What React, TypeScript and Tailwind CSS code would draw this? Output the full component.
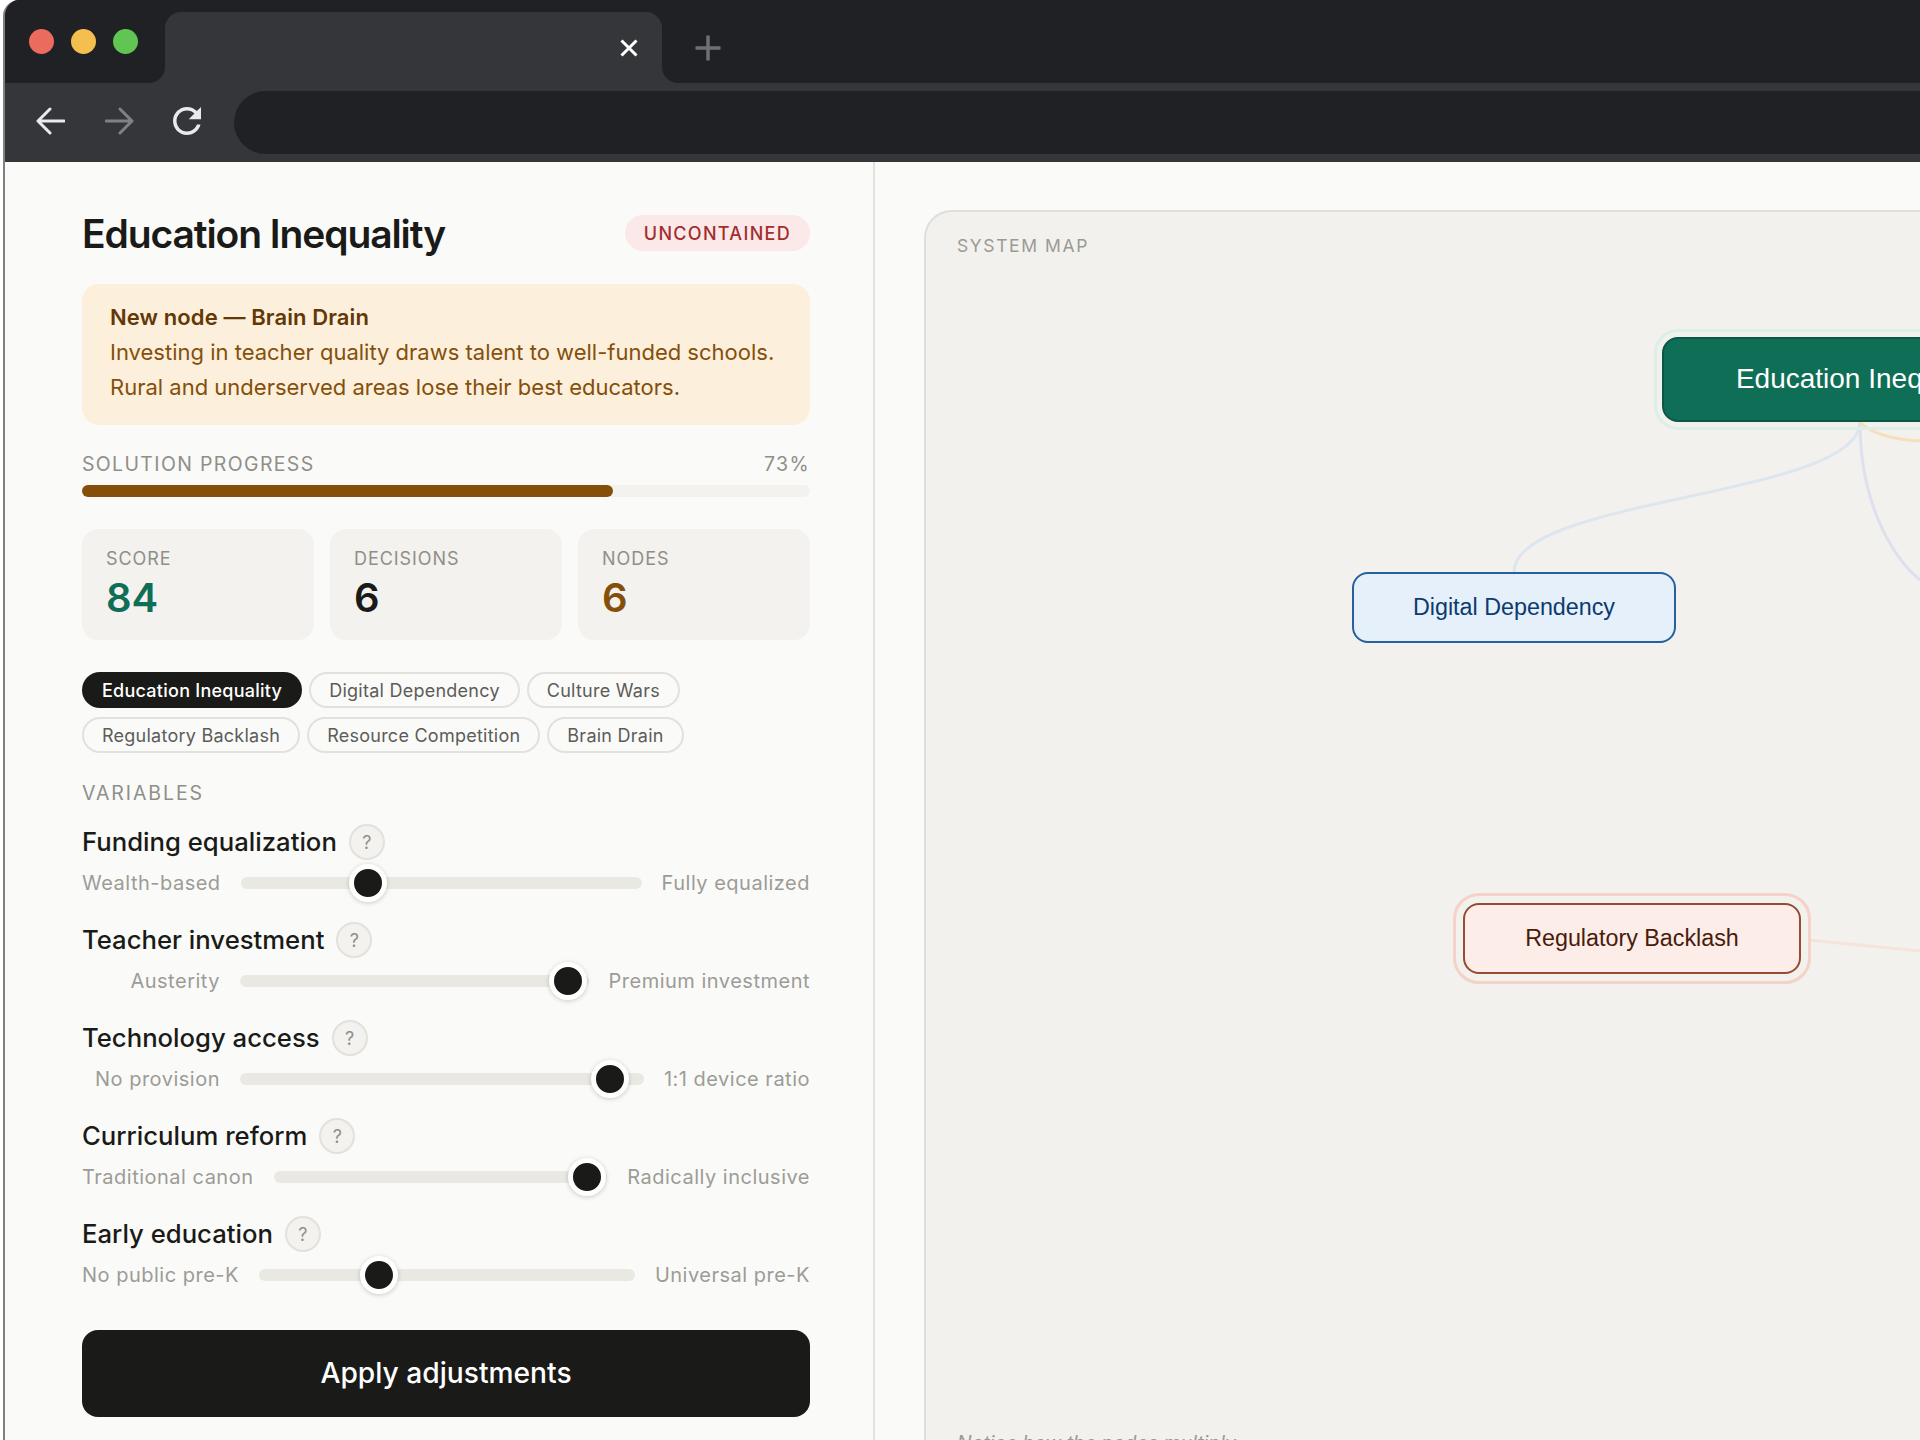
import React from 'react';

const pillsTop = ['Digital Dependency', 'Culture Wars'];
const pillsBottom = ['Regulatory Backlash', 'Resource Competition', 'Brain Drain'];

const variables = [
  { name: 'Funding equalization', left: 'Wealth-based', right: 'Fully equalized', pos: 31.8 },
  { name: 'Teacher investment', left: 'Austerity', right: 'Premium investment', pos: 94 },
  { name: 'Technology access', left: 'No provision', right: '1:1 device ratio', pos: 91.5 },
  { name: 'Curriculum reform', left: 'Traditional canon', right: 'Radically inclusive', pos: 94 },
  { name: 'Early education', left: 'No public pre-K', right: 'Universal pre-K', pos: 31.9 },
];

const Pill = ({ label }: { label: string }) => (
  <span className="flex h-[36px] items-center rounded-full border-2 border-[#e2e1dc] px-[18px] text-[18px] tracking-[0.25px] text-[#5c5c58]">
    {label}
  </span>
);

const Stat = ({ label, value, color }: { label: string; value: string; color: string }) => (
  <div className="h-[111px] flex-1 rounded-[16px] bg-[#f3f2ee] pl-[24px] pt-[19px]">
    <div className="text-[18px] leading-[22px] tracking-[0.95px] text-[#8f8f8a]">{label}</div>
    <div className={`mt-[4px] text-[40px] font-semibold leading-[48px] ${color}`}>{value}</div>
  </div>
);

const Variable = ({ name, left, right, pos }: (typeof variables)[number]) => (
  <div className="h-[98px]">
    <div className="flex h-[36px] items-center gap-[12px]">
      <span className="text-[25.7px] font-medium text-[#1a1a18]">{name}</span>
      <span className="flex h-[36px] w-[36px] items-center justify-center rounded-full border-2 border-[#e2e1dc] bg-[#f3f2ee] text-[18px] text-[#8f8f8a]">
        ?
      </span>
    </div>
    <div className="mt-[5px] flex h-[36px] items-center gap-[20px] text-[20px] tracking-[0.5px] text-[#9c9c97]">
      <span className="min-w-[138px] text-right">{left}</span>
      <div className="relative h-[12px] flex-1 rounded-full bg-[#e9e8e3]">
        <div
          className="absolute top-1/2 h-[38px] w-[38px] -translate-x-1/2 -translate-y-1/2 rounded-full border-[5px] border-white bg-[#1a1a18] shadow-[0_1px_5px_rgba(0,0,0,0.2)]"
          style={{ left: `${pos}%` }}
        />
      </div>
      <span>{right}</span>
    </div>
  </div>
);

const BrowserChrome = () => (
  <div className="bg-[#35363a]">
    <div className="flex h-[83px]">
      <div className="flex w-[160px] shrink-0 items-start gap-[17px] rounded-br-[16px] bg-[#202124] pl-[24px] pt-[29px]">
        <span className="h-[25px] w-[25px] rounded-full bg-[#ed6a5e]" />
        <span className="h-[25px] w-[25px] rounded-full bg-[#f5bf4f]" />
        <span className="h-[25px] w-[25px] rounded-full bg-[#61c554]" />
      </div>
      <div className="w-[497px] shrink-0 bg-[#202124]">
        <div className="mt-[12px] flex h-[71px] items-start justify-end rounded-t-[16px] bg-[#35363a] pr-[24px] pt-[27px]">
          <svg width="18" height="18" viewBox="0 0 18 18" stroke="#ffffff" strokeWidth="3" fill="none">
            <path d="M1.5 1.5L16.5 16.5M16.5 1.5L1.5 16.5" />
          </svg>
        </div>
      </div>
      <div className="flex-1 rounded-bl-[16px] bg-[#202124] pl-[33px] pt-[35px]">
        <svg width="26" height="26" viewBox="0 0 26 26" stroke="#6f7074" strokeWidth="3.5" fill="none">
          <path d="M13 0.5V25.5M0.5 13H25.5" />
        </svg>
      </div>
    </div>
    <div className="flex h-[79px] items-center">
      <div className="flex w-[229px] shrink-0 items-center pb-[3px]">
        <svg width="30" height="30" viewBox="0 0 30 30" className="ml-[30px]" stroke="#e8eaed" strokeWidth="3" fill="none" strokeLinecap="round" strokeLinejoin="round">
          <path d="M29 15H3M15 3L3 15L15 27" />
        </svg>
        <svg width="30" height="30" viewBox="0 0 30 30" className="ml-[40px]" stroke="#808184" strokeWidth="3" fill="none" strokeLinecap="round" strokeLinejoin="round">
          <path d="M1 15H27M15 3L27 15L15 27" />
        </svg>
        <svg width="42" height="42" viewBox="0 0 24 24" className="ml-[31px]" fill="#e8eaed">
          <path d="M17.65 6.35C16.2 4.9 14.21 4 12 4c-4.42 0-7.99 3.58-7.99 8s3.57 8 7.99 8c3.73 0 6.84-2.55 7.73-6h-2.08c-.82 2.33-3.04 4-5.65 4-3.31 0-6-2.69-6-6s2.69-6 6-6c1.66 0 3.14.69 4.22 1.78L13 11h7V4l-2.35 2.35z" />
        </svg>
      </div>
      <div className="h-[63px] flex-1 rounded-l-full bg-[#202124]" />
    </div>
  </div>
);

const SidePanel = () => (
  <aside className="w-[870px] shrink-0 border-r-2 border-[#e2e1dc] pl-[77px] pr-[63px] pt-[53px]">
    <div className="flex h-[36px] items-center justify-between">
      <h1 className="pt-[2px] text-[39px] font-semibold tracking-[-1.1px] text-[#1a1a18]">Education Inequality</h1>
      <span className="flex h-[36px] items-center rounded-full bg-[#fbe9ea] px-[19px] text-[18px] font-medium tracking-[1.3px] text-[#a32d2d]">
        UNCONTAINED
      </span>
    </div>

    <div className="mt-[33px] h-[141px] rounded-[17px] bg-[#fcf0dc] pl-[28px] pt-[16px] text-[22px] leading-[35px] text-[#854f0b]">
      <div className="font-semibold tracking-[0.1px] text-[#633806]">New node — Brain Drain</div>
      <div>Investing in teacher quality draws talent to well-funded schools.</div>
      <div>Rural and underserved areas lose their best educators.</div>
    </div>

    <div className="mt-[27px] flex h-[26px] items-center justify-between text-[19.5px] tracking-[1.35px] text-[#8f8f8a]">
      <span>SOLUTION PROGRESS</span>
      <span>73%</span>
    </div>
    <div className="mt-[7px] h-[12px] rounded-full bg-[#f3f2ee]">
      <div className="h-full w-[73%] rounded-full bg-[#854f0b]" />
    </div>

    <div className="mt-[32px] flex gap-[16px]">
      <Stat label="SCORE" value="84" color="text-[#0f6e56]" />
      <Stat label="DECISIONS" value="6" color="text-[#1a1a18]" />
      <Stat label="NODES" value="6" color="text-[#854f0b]" />
    </div>

    <div className="mt-[32px] flex gap-[7px]">
      <span className="flex h-[36px] items-center rounded-full bg-[#1a1a18] px-[20px] text-[18px] font-medium tracking-[0.25px] text-white">
        Education Inequality
      </span>
      {pillsTop.map((p) => (
        <Pill key={p} label={p} />
      ))}
    </div>
    <div className="mt-[9px] flex gap-[7px]">
      {pillsBottom.map((p) => (
        <Pill key={p} label={p} />
      ))}
    </div>

    <div className="mt-[27px] h-[26px] text-[19.5px] leading-[26px] tracking-[1.9px] text-[#8f8f8a]">VARIABLES</div>

    <div className="mt-[18px]">
      {variables.map((v) => (
        <Variable key={v.name} {...v} />
      ))}
    </div>

    <button className="mt-[16px] h-[87px] w-full rounded-[16px] bg-[#1a1a18] text-[28.2px] font-medium text-white">
      Apply adjustments
    </button>
  </aside>
);

const SystemMap = () => (
  <div className="relative h-[1400px] w-[1200px] rounded-tl-[28px] border-2 border-[#dfded9] bg-[#f2f1ed]">
    <div className="absolute left-[31px] top-[22px] text-[17.5px] leading-[24px] tracking-[1.6px] text-[#9a9a95]">SYSTEM MAP</div>

    {/* map edges, coordinates relative to the canvas */}
    <svg className="absolute left-0 top-0" width="1000" height="800" fill="none" strokeWidth="3">
      <path d="M934 210C934 285 588 285 588 360" stroke="#dde6ef" />
      <path d="M934 210C934 288 964 343 994 368" stroke="#dfe0ee" />
      <path d="M934 210C945 222 970 228 994 229" stroke="#f7dfb9" />
      <path d="M883 728L994 739" stroke="#f6e3db" />
    </svg>

    <div className="absolute left-[736px] top-[125px] flex h-[85px] w-[400px] items-center justify-center rounded-[16px] border-[2px] border-[#0b5846] bg-[#0f6e56] pb-[2px] font-['Liberation_Sans',sans-serif] text-[28px] text-white outline-[3px] outline-offset-[5px] outline-[#dcefe7]">
      Education Inequality
    </div>
    <div className="absolute left-[426px] top-[360px] flex h-[71px] w-[324px] items-center justify-center rounded-[16px] border-[2px] border-[#27609f] bg-[#e6f0fa] font-['Liberation_Sans',sans-serif] text-[23.3px] text-[#0c3a6e]">
      Digital Dependency
    </div>
    <div className="absolute left-[537px] top-[691px] flex h-[71px] w-[338px] items-center justify-center rounded-[16px] border-[2px] border-[#954c33] bg-[#fcede8] font-['Liberation_Sans',sans-serif] text-[23.3px] text-[#4a1b0c] outline-[3px] outline-offset-[7px] outline-[#f4d2c6]">
      Regulatory Backlash
    </div>

    <div className="absolute left-[31px] top-[1218px] text-[19.5px] italic leading-[26px] text-[#9a9a95]">
      Notice how the nodes multiply
    </div>
  </div>
);

export default function App() {
  return (
    <div className="h-[1440px] w-[1920px] overflow-hidden bg-white font-['Inter',sans-serif]">
      <div className="ml-[3px] flex h-[1440px] flex-col overflow-hidden rounded-tl-[16px] border-l-2 border-[#808080] bg-[#fafaf8]">
        <BrowserChrome />
        <div className="flex min-h-0 flex-1">
          <SidePanel />
          <div className="min-w-0 flex-1 pl-[49px] pt-[48px]">
            <SystemMap />
          </div>
        </div>
      </div>
    </div>
  );
}
